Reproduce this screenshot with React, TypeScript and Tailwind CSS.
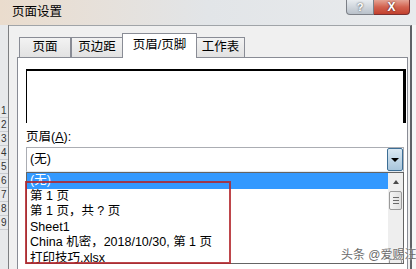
const items = [
  "(无)",
  "第 1 页",
  "第 1 页，共 ? 页",
  "Sheet1",
  "China 机密，2018/10/30,  第 1 页",
  "打印技巧.xlsx",
];

const tabs = [
  { label: "页面", w: "w-[52px]" },
  { label: "页边距", w: "w-[52px]" },
  { label: "页眉/页脚", w: "w-[75px]", active: true },
  { label: "工作表", w: "w-[49px]" },
];

const TitleBar = () => {
  return (
    <div className="flex h-[25px] w-full flex-none bg-gradient-to-r from-[#eadccd] via-[#e2e5e8] to-[#e9ebed]">
      <div className="pl-[12px] leading-[25px] text-[12.5px] text-black">页面设置</div>
      <div className="ml-auto mr-[6px] flex h-[15px]">
        <div className="flex w-[28px] items-center justify-center rounded-bl-[4px] border border-t-0 border-[#7b7f86] bg-gradient-to-b from-[#e8ecf0] to-[#b9c1ca] text-[11px] font-bold leading-none text-white [text-shadow:0_0_2px_#333]">
          ?
        </div>
        <div className="flex w-[36px] items-center justify-center rounded-br-[4px] border border-l-0 border-t-0 border-[#7a3030] bg-gradient-to-b from-[#e4a394] via-[#d2624f] to-[#c2402e] text-[12px] font-bold leading-none text-white [text-shadow:0_0_2px_#3a1010]">
          X
        </div>
      </div>
    </div>
  );
};

const LeftStrip = () => {
  return (
    <div className="flex w-[9px] flex-none flex-col border-r border-[#7d7f82] bg-[#e7e9eb]">
      <div className="h-[79px]" />
      {[1, 2, 3, 4, 5, 6, 7, 8, 9].map((n) => (
        <div
          key={n}
          className="h-[14px] flex-none overflow-hidden border-b border-[#c9ccd0] pl-[1px] text-[10px] leading-[14px] text-[#333]"
        >
          {n}
        </div>
      ))}
    </div>
  );
};

const ScrollBar = () => {
  return (
    <div className="flex w-[15px] flex-none flex-col bg-[#eeeeee]">
      <div className="flex h-[18px] items-center justify-center">
        <div className="h-0 w-0 border-x-[3px] border-b-[4px] border-x-transparent border-b-[#4a4a4a]" />
      </div>
      <div className="mx-[1px] flex h-[19px] flex-col items-center justify-center gap-[2px] rounded-[2px] border border-[#9a9a9a] bg-gradient-to-r from-[#f4f4f4] to-[#e0e0e0]">
        <div className="h-px w-[6px] bg-[#6a6a6a]" />
        <div className="h-px w-[6px] bg-[#6a6a6a]" />
        <div className="h-px w-[6px] bg-[#6a6a6a]" />
      </div>
      <div className="flex-1" />
      <div className="mx-[1px] h-[4px] rounded-t-[2px] border border-b-0 border-[#9a9a9a]" />
    </div>
  );
};

const Combo = () => {
  return (
    <div className="relative ml-[8px] mr-[3px] mt-[1px] flex h-[25px] border border-[#abadb3] border-b-[#e3e9ef] bg-white">
      <div className="flex-1 pl-[3px] leading-[23px]">(无)</div>
      <div className="flex w-[16px] items-center justify-center rounded-[2px] border border-[#3c6e95] bg-gradient-to-b from-[#dbe9f3] to-[#a9c6dc]">
        <div className="h-0 w-0 border-x-[4px] border-t-[4px] border-x-transparent border-t-black" />
      </div>
      <div className="absolute left-[-1px] right-[-1px] top-[24px] flex h-[92px] border border-[#646464] bg-white">
        <div className="flex flex-1 flex-col">
          {items.map((t, i) => (
            <div
              key={t}
              className={
                i === 0
                  ? "h-[15.5px] flex-none whitespace-nowrap bg-[#3399ff] pl-[3px] leading-[15.5px] text-white"
                  : "h-[15.5px] flex-none whitespace-nowrap pl-[3px] leading-[15.5px] text-black"
              }
            >
              {t}
            </div>
          ))}
        </div>
        <ScrollBar />
      </div>
    </div>
  );
};

export default function App() {
  return (
    <div className="relative flex h-[269px] w-[416px] flex-col overflow-hidden bg-[#e6e8ea] font-['Liberation_Sans','Noto_Sans_CJK_SC',sans-serif] text-[12.5px] text-black">
      <TitleBar />
      <div className="flex flex-1">
        <LeftStrip />
        <div className="flex flex-1 flex-col border-r-2 border-t border-[#5f6266] border-t-[#a0a4a8] bg-[#f0f0f0] pl-[8px] pr-[2px]">
          <div className="relative z-10 -mb-px ml-[2px] mt-[7px] flex h-[25px] items-end">
            {tabs.map((tab) =>
              tab.active ? (
                <div
                  key={tab.label}
                  className={`${tab.w} -mx-[1px] flex h-[25px] items-center justify-center border border-b-0 border-[#898c95] bg-white pb-[1px]`}
                >
                  {tab.label}
                </div>
              ) : (
                <div
                  key={tab.label}
                  className={`${tab.w} flex h-[21px] items-center justify-center border border-[#898c95] bg-gradient-to-b from-[#f3f3f3] to-[#e2e2e2]`}
                >
                  {tab.label}
                </div>
              )
            )}
          </div>
          <div className="flex flex-1 flex-col border border-b-0 border-[#898c95] bg-white">
            <div className="ml-[8px] mr-[1px] mt-[11px] h-[54px] border-l border-r-[3px] border-t-2 border-black" />
            <div className="ml-[8px] mt-[5px] h-[18px] leading-[18px]">
              页眉(<span className="underline">A</span>):
            </div>
            <Combo />
          </div>
        </div>
        <div className="w-[4px] flex-none bg-[#f6f6f6]" />
      </div>
      <div className="absolute left-[25px] top-[181px] h-[83px] w-[206px] border-2 border-[#b3262c]/85" />
      <div className="absolute left-[341px] top-[248px] whitespace-nowrap text-[12px] leading-[14px] text-[#6b6b6b] [text-shadow:0_0_2px_#fff]">
        头条 @爱赐汪
      </div>
    </div>
  );
}
